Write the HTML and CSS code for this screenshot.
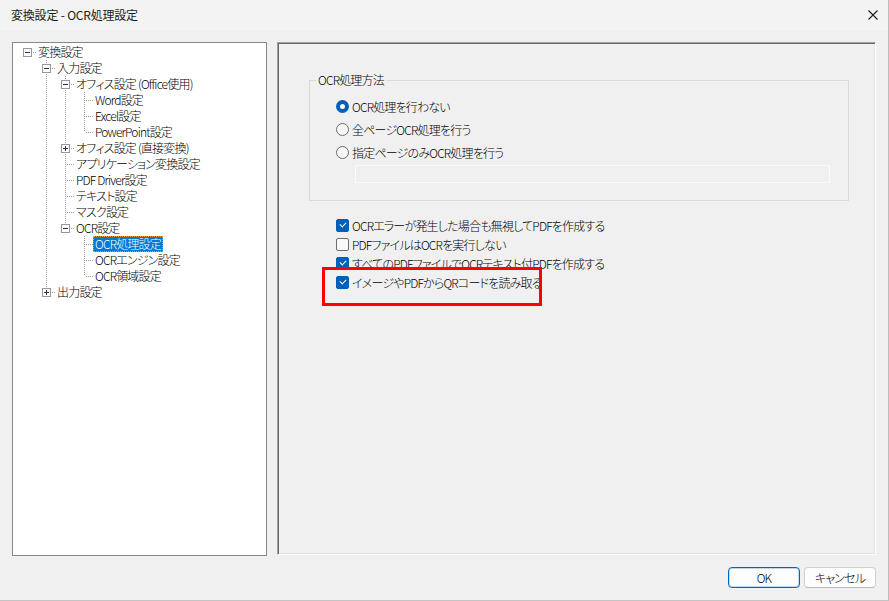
FILE: index.html
```html
<!DOCTYPE html>
<html lang="ja">
<head>
<meta charset="utf-8">
<title>変換設定 - OCR処理設定</title>
<link rel="stylesheet" href="styles.css">
</head>
<body>
<div class="window">
  <header class="titlebar">
    <span class="title">変換設定 - OCR処理設定</span>
    <svg class="close" width="10" height="10" viewBox="0 0 10 10" aria-label="閉じる"><path d="M0.5 0.5L9.5 9.5M9.5 0.5L0.5 9.5" stroke="#1b1b1b" stroke-width="1.1" fill="none"/></svg>
  </header>
  <div class="main">
    <nav class="tree">
      <div class="row"><span class="c root"><i class="box"></i></span><span class="label">変換設定</span></div>
      <div class="row"><span class="c"></span><span class="c tee"><i class="box"></i></span><span class="label">入力設定</span></div>
      <div class="row"><span class="c"></span><span class="c pass"></span><span class="c tee"><i class="box"></i></span><span class="label">オフィス設定 (Office使用)</span></div>
      <div class="row"><span class="c"></span><span class="c pass"></span><span class="c pass"></span><span class="c tee"></span><span class="label">Word設定</span></div>
      <div class="row"><span class="c"></span><span class="c pass"></span><span class="c pass"></span><span class="c tee"></span><span class="label">Excel設定</span></div>
      <div class="row"><span class="c"></span><span class="c pass"></span><span class="c pass"></span><span class="c ell"></span><span class="label">PowerPoint設定</span></div>
      <div class="row"><span class="c"></span><span class="c pass"></span><span class="c tee"><i class="box plus"></i></span><span class="label">オフィス設定 (直接変換)</span></div>
      <div class="row"><span class="c"></span><span class="c pass"></span><span class="c tee"></span><span class="label">アプリケーション変換設定</span></div>
      <div class="row"><span class="c"></span><span class="c pass"></span><span class="c tee"></span><span class="label">PDF Driver設定</span></div>
      <div class="row"><span class="c"></span><span class="c pass"></span><span class="c tee"></span><span class="label">テキスト設定</span></div>
      <div class="row"><span class="c"></span><span class="c pass"></span><span class="c tee"></span><span class="label">マスク設定</span></div>
      <div class="row"><span class="c"></span><span class="c pass"></span><span class="c ell"><i class="box"></i></span><span class="label">OCR設定</span></div>
      <div class="row"><span class="c"></span><span class="c pass"></span><span class="c"></span><span class="c tee"></span><span class="label selected">OCR処理設定</span></div>
      <div class="row"><span class="c"></span><span class="c pass"></span><span class="c"></span><span class="c tee"></span><span class="label">OCRエンジン設定</span></div>
      <div class="row"><span class="c"></span><span class="c pass"></span><span class="c"></span><span class="c ell"></span><span class="label">OCR領域設定</span></div>
      <div class="row"><span class="c"></span><span class="c ell"><i class="box plus"></i></span><span class="label">出力設定</span></div>
    </nav>
    <section class="panel">
      <fieldset class="group">
        <legend>OCR処理方法</legend>
        <div class="group-body">
          <div class="opt"><span class="radio on"></span>OCR処理を行わない</div>
          <div class="opt"><span class="radio"></span>全ページOCR処理を行う</div>
          <div class="opt"><span class="radio"></span>指定ページのみOCR処理を行う</div>
          <div class="pages"></div>
        </div>
      </fieldset>
      <div class="checks">
        <div class="chk"><span class="box-c on"></span>OCRエラーが発生した場合も無視してPDFを作成する</div>
        <div class="chk"><span class="box-c"></span>PDFファイルはOCRを実行しない</div>
        <div class="chk"><span class="box-c on"></span>すべてのPDFファイルでOCRテキスト付PDFを作成する</div>
        <div class="chk"><span class="box-c on"></span>イメージやPDFからQRコードを読み取る</div>
      </div>
      <div class="highlight"></div>
    </section>
  </div>
  <footer class="footer">
    <button class="btn default">OK</button>
    <button class="btn">キャンセル</button>
  </footer>
</div>
</body>
</html>
```
FILE: styles.css
```css
html, body {
  margin: 0;
  padding: 0;
  background: #f0f0f0;
}
body {
  font-family: "Noto Sans CJK JP", sans-serif;
  font-size: 12px;
  font-weight: 300;
  letter-spacing: -0.8px;
  color: #000;
  font-feature-settings: "palt";
}
.window {
  width: 889px;
  height: 601px;
  box-sizing: border-box;
  border-right: 1px solid #bdbdbd;
  border-bottom: 1px solid #c4c4c4;
  background: #f0f0f0;
  display: flex;
  flex-direction: column;
}
.titlebar {
  height: 31px;
  flex: none;
  background: #f3f3f3;
  display: flex;
  align-items: center;
  justify-content: space-between;
  padding: 0 10px 0 11px;
}
.title {
  font-family: "Noto Sans CJK JP", sans-serif;
  font-size: 12px;
  font-weight: 400;
  letter-spacing: -0.2px;
  line-height: 16px;
  color: #1a1a1a;
  margin-top: -1px;
}
.close { display: block; margin-top: -1px; }

.main {
  display: flex;
  gap: 10px;
  padding: 11px 12px 0 12px;
  height: 514px;
  flex: none;
}
.tree {
  width: 255px;
  flex: none;
  box-sizing: border-box;
  background: #fff;
  border: 1px solid #828790;
  padding: 1px 0 0 5px;
}
.row {
  display: flex;
  height: 16px;
  align-items: stretch;
}
.c {
  width: 19px;
  height: 16px;
  flex: none;
  position: relative;
}
.c.pass::before, .c.tee::before, .c.ell::before {
  content: "";
  position: absolute;
  left: 9px;
  top: 0;
  width: 1px;
  height: 16px;
  background: linear-gradient(#a0a0a0 50%, transparent 50%) 0 0 / 1px 2px;
}
.c.ell::before { height: 8px; }
.c.tee::after, .c.ell::after, .c.root::after {
  content: "";
  position: absolute;
  left: 11px;
  top: 8px;
  width: 8px;
  height: 1px;
  background: linear-gradient(to right, #a0a0a0 50%, transparent 50%) 0 0 / 2px 1px;
}
.box {
  position: absolute;
  left: 5px;
  top: 4px;
  width: 9px;
  height: 9px;
  box-sizing: border-box;
  border: 1px solid #999;
  background: #fff;
  z-index: 1;
}
.box::before {
  content: "";
  position: absolute;
  left: 1px;
  top: 3px;
  width: 5px;
  height: 1px;
  background: #25335f;
}
.box.plus::after {
  content: "";
  position: absolute;
  left: 3px;
  top: 1px;
  width: 1px;
  height: 5px;
  background: #25335f;
}
.label {
  margin-left: -1px;
  padding: 0 1px;
  border: 1px dotted transparent;
  line-height: 14px;
  height: 14px;
  white-space: nowrap;
}
.label.selected {
  background: #0078d7;
  color: #fff;
  border-color: #f0a030;
}

.panel {
  flex: 1;
  position: relative;
  border-top: 1px solid #a0a0a0;
  border-left: 1px solid #a0a0a0;
  border-right: 1px solid #fff;
  border-bottom: 1px solid #fff;
  box-shadow: inset 1px 1px 0 #696969, inset -1px -1px 0 #e3e3e3;
  padding: 29px 26px 0 31px;
  height: 513px;
  box-sizing: border-box;
}
.group {
  margin: 0;
  padding: 0;
  border: 1px solid #d9d9d9;
  min-width: 0;
}
.group legend {
  margin-left: 6px;
  padding: 0 2px;
  line-height: 16px;
}
.group-body {
  padding: 7px 18px 17px 26px;
}
.opt {
  display: flex;
  align-items: center;
  height: 23px;
  white-space: nowrap;
}
.radio {
  width: 13px;
  height: 13px;
  box-sizing: border-box;
  border-radius: 50%;
  border: 1px solid #6e6e6e;
  background: #f6f6f6;
  margin-right: 3px;
  flex: none;
}
.radio.on {
  border: 4px solid #005fb8;
  background: #fff;
}
.pages {
  margin: 1px 0 0 19px;
  height: 18px;
  box-sizing: border-box;
  border: 1px solid #fbfbfb;
}
.checks {
  margin: 15px 0 0 27px;
}
.chk {
  display: flex;
  align-items: center;
  height: 19px;
  white-space: nowrap;
}
.box-c {
  width: 13px;
  height: 13px;
  box-sizing: border-box;
  border-radius: 2px;
  border: 1px solid #6e6e6e;
  background: #f9f9f9;
  margin-right: 3px;
  flex: none;
  position: relative;
}
.box-c.on {
  border-color: #005fb8;
  background: #005fb8;
}
.box-c.on::after {
  content: "";
  position: absolute;
  left: 3px;
  top: 2px;
  width: 5px;
  height: 3px;
  border-left: 1px solid #fff;
  border-bottom: 1px solid #fff;
  transform: rotate(-45deg);
}
.highlight {
  position: absolute;
  left: 44px;
  top: 224px;
  width: 220px;
  height: 39px;
  box-sizing: border-box;
  border: 3px solid #ff0000;
}

.footer {
  display: flex;
  justify-content: flex-end;
  gap: 4px;
  padding: 11px 12px 0 0;
}
.btn {
  width: 72px;
  height: 21px;
  box-sizing: border-box;
  font-family: inherit;
  font-size: 12px;
  font-weight: 300;
  letter-spacing: -0.8px;
  font-feature-settings: "palt";
  line-height: 14px;
  padding: 0;
  color: #000;
  background: #fdfdfd;
  border: 1px solid #d0d0d0;
  border-bottom-color: #b8b8b8;
  border-radius: 4px;
}
.btn.default {
  border: 1px solid #0067c0;
  box-shadow: inset 0 0 0 1px rgba(0, 103, 192, 0.25);
}
```
